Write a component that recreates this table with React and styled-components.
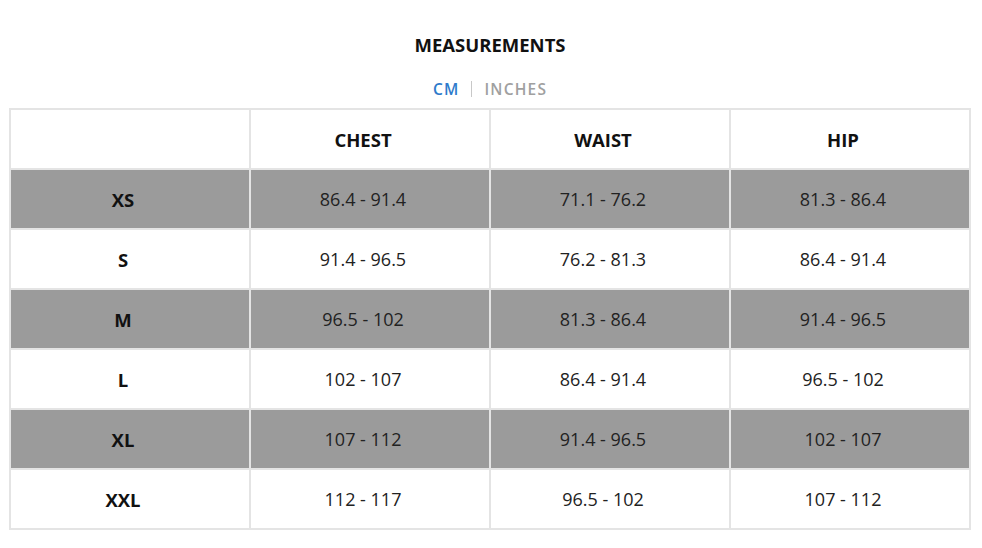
import styled, { createGlobalStyle } from 'styled-components';

const GlobalStyle = createGlobalStyle`
  html, body {
    margin: 0;
    padding: 0;
    background: #fff;
  }
  body {
    font-family: 'Open Sans', 'Liberation Sans', sans-serif;
    color: #1f1f1f;
  }
`;

const Page = styled.div`
  width: 982px;
  padding: 33px 11px 0 9px;
  box-sizing: border-box;
`;

const Title = styled.h2`
  margin: 0;
  text-align: center;
  font-size: 18.5px;
  font-weight: 700;
  line-height: 24px;
  color: #111;
`;

const UnitSwitch = styled.div`
  display: flex;
  justify-content: center;
  align-items: center;
  gap: 12px;
  margin: 21px 0 8px 0;
  height: 22px;
`;

const Unit = styled.span`
  font-size: 15.5px;
  font-weight: 600;
  letter-spacing: 1.2px;
  color: ${p => (p.active ? '#2e7bcb' : '#a0a0a0')};
`;

const Divider = styled.span`
  width: 1px;
  height: 16px;
  background: #c8c8c8;
`;

const Table = styled.div`
  display: grid;
  grid-template-columns: repeat(4, 1fr);
  grid-auto-rows: 58px;
  gap: 2px;
  padding: 2px;
  background: #e4e4e4;
`;

const Cell = styled.div`
  display: flex;
  align-items: center;
  justify-content: center;
  padding-right: 14px;
  background: ${p => (p.shaded ? '#9b9b9b' : '#fff')};
  font-size: ${p => (p.head ? '18.5px' : '18px')};
  font-weight: ${p => (p.head ? 700 : 400)};
  color: ${p => (p.head ? '#111' : '#222')};
`;

const rows = [
  ['XS', '86.4 - 91.4', '71.1 - 76.2', '81.3 - 86.4'],
  ['S', '91.4 - 96.5', '76.2 - 81.3', '86.4 - 91.4'],
  ['M', '96.5 - 102', '81.3 - 86.4', '91.4 - 96.5'],
  ['L', '102 - 107', '86.4 - 91.4', '96.5 - 102'],
  ['XL', '107 - 112', '91.4 - 96.5', '102 - 107'],
  ['XXL', '112 - 117', '96.5 - 102', '107 - 112'],
];

export default function App() {
  return (
    <Page>
      <GlobalStyle />
      <Title>MEASUREMENTS</Title>
      <UnitSwitch>
        <Unit active>CM</Unit>
        <Divider />
        <Unit>INCHES</Unit>
      </UnitSwitch>
      <Table>
        <Cell head />
        <Cell head>CHEST</Cell>
        <Cell head>WAIST</Cell>
        <Cell head>HIP</Cell>
        {rows.map((row, i) =>
          row.map((value, j) => (
            <Cell key={`${i}-${j}`} head={j === 0} shaded={i % 2 === 0}>
              {value}
            </Cell>
          ))
        )}
      </Table>
    </Page>
  );
}
